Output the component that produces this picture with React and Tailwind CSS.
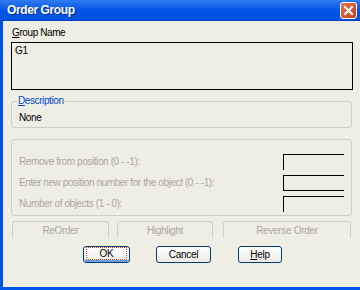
import React from "react";

const font = { fontFamily: '"Liberation Sans", Arial, sans-serif' };

function GroupBox({ label, className, children }) {
  return (
    <div className={"relative rounded-[3px] border border-[#d0d0bf] " + className}>
      {label && (
        <div className="absolute left-[5px] -top-[7px] bg-[#efeee4] px-[1px] text-[10px] leading-[12px] tracking-[-0.4px] text-[#0046d5]">
          {label}
        </div>
      )}
      {children}
    </div>
  );
}

function XPButton({ children, focused, className }) {
  return (
    <div
      className={
        "flex items-center justify-center rounded-[3px] border border-[#003c74] bg-gradient-to-b from-[#ffffff] to-[#ecebe6] text-[10px] tracking-[-0.3px] text-black " +
        className
      }
    >
      <div
        className={
          "flex h-full w-full items-center justify-center rounded-[2px] " +
          (focused ? "border-b-2 border-b-[#6a9ee8] " : "")
        }
      >
        <div
          className={
            "flex h-[13px] w-[calc(100%-4px)] items-center justify-center " +
            (focused ? "border border-dotted border-[#b04a20]" : "")
          }
        >
          {children}
        </div>
      </div>
    </div>
  );
}

function DisabledTab({ children, className }) {
  return (
    <div
      className={
        "flex h-[17px] items-center justify-center rounded-t-[3px] border border-b-0 border-[#d0d0bf] text-[10px] tracking-[-0.3px] text-[#aca899] " +
        className
      }
    >
      {children}
    </div>
  );
}

function Field({ bottom }) {
  return (
    <div
      className={
        "h-[16px] w-[61px] border-l border-t border-black " +
        (bottom ? "border-b" : "")
      }
    />
  );
}

export default function App() {
  return (
    <div className="flex h-[290px] w-[360px] flex-col overflow-hidden bg-[#efeee4]" style={font}>
      {/* title bar */}
      <div className="flex h-[21px] shrink-0 items-center justify-between border-b border-[#0041c6] bg-gradient-to-b from-[#2f7bf0] via-[#0055e8] to-[#0052e0] pl-[7px] pr-[3px]">
        <span className="text-[12px] font-bold leading-none tracking-[-0.4px] text-white [text-shadow:1px_1px_0_#0a2a8a]">
          Order Group
        </span>
        <div className="flex h-[17px] w-[17px] items-center justify-center rounded-[3px] border border-white bg-gradient-to-br from-[#e8744a] to-[#c4401e]">
          <svg width="11" height="11" viewBox="0 0 11 11">
            <path d="M2 2 L9 9 M9 2 L2 9" stroke="white" strokeWidth="2" strokeLinecap="square" />
          </svg>
        </div>
      </div>

      {/* body */}
      <div className="flex flex-1 flex-col border-b-[3px] border-l-[3px] border-[#0055e8] pl-[8px] pr-[8px] text-[10px] tracking-[-0.4px]">
        <div className="mt-[6px] h-[12px] pl-[1px] leading-[12px] text-black">
          <span className="underline">G</span>roup Name
        </div>
        <div className="mt-[3px] h-[48px] w-[342px] border border-black px-[3px] pt-[2px] leading-[12px] text-black">
          G1
        </div>

        <GroupBox
          label={
            <>
              <span className="underline">D</span>escription
            </>
          }
          className="mt-[11px] h-[27px] w-[341px]"
        >
          <div className="pl-[7px] pt-[10px] leading-[12px] text-black">None</div>
        </GroupBox>

        <GroupBox className="mt-[11px] h-[77px] w-[341px]">
          <div className="flex flex-col gap-[5px] pl-[7px] pr-[7px] pt-[14px] leading-[12px] text-[#aca899]">
            <div className="flex items-center justify-between">
              <span>Remove from position (0 - -1):</span>
              <Field />
            </div>
            <div className="flex items-center justify-between">
              <span>Enter new position number for the object (0 - -1):</span>
              <Field bottom />
            </div>
            <div className="flex items-center justify-between">
              <span>Number of objects (1 - 0):</span>
              <Field />
            </div>
          </div>
        </GroupBox>

        <div className="mt-[5px] flex pl-[1px]">
          <DisabledTab className="w-[97px]">ReOrder</DisabledTab>
          <DisabledTab className="ml-[8px] w-[96px]">Highlight</DisabledTab>
          <DisabledTab className="ml-[10px] w-[128px]">Reverse Order</DisabledTab>
        </div>

        <div className="mt-[8px] flex pl-[72px]">
          <XPButton focused className="h-[17px] w-[47px]">OK</XPButton>
          <XPButton className="ml-[26px] h-[17px] w-[55px]">Cancel</XPButton>
          <XPButton className="ml-[27px] h-[17px] w-[44px]">
            <span>
              <span className="underline">H</span>elp
            </span>
          </XPButton>
        </div>
      </div>
    </div>
  );
}
